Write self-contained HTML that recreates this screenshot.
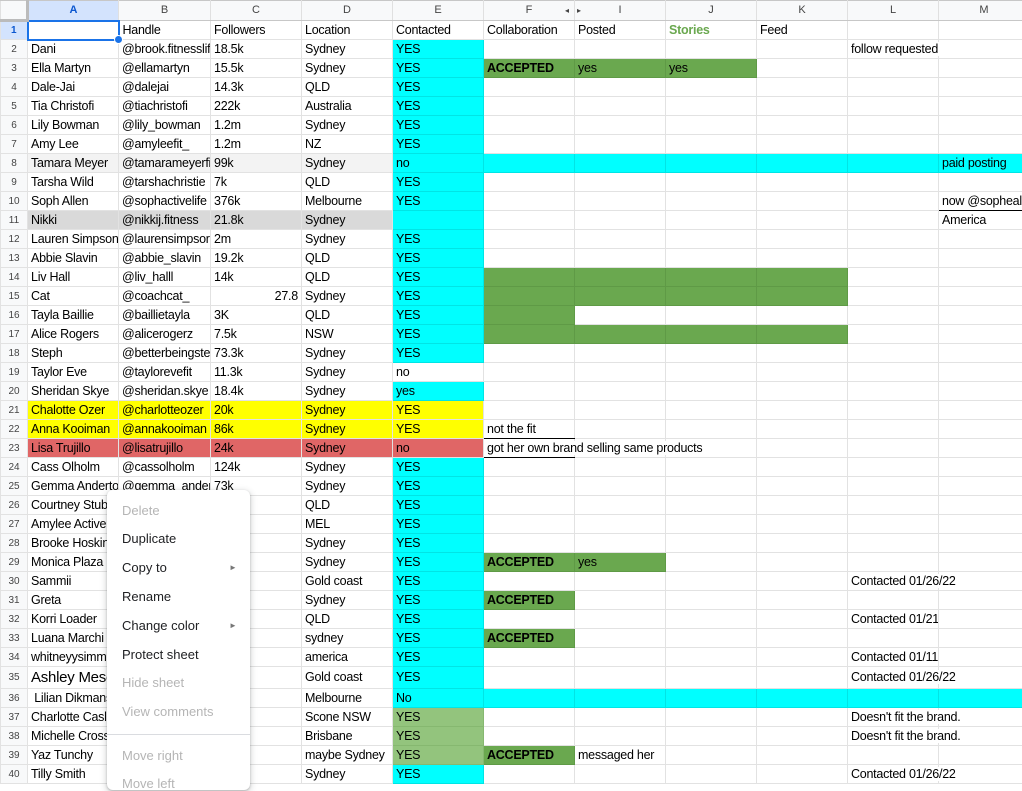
<!DOCTYPE html>
<html><head><meta charset="utf-8">
<style>
body{margin:0;width:1022px;height:782px;overflow:hidden;background:#fff;font-family:"Liberation Sans",Arial,sans-serif;position:relative;}
table{border-collapse:collapse;table-layout:fixed;position:absolute;left:0;top:0;width:1029px;}
td{border:1px solid #e2e2e2;height:19px;padding:0 3px;font-size:12.5px;letter-spacing:-0.25px;color:#000;white-space:nowrap;overflow:hidden;line-height:17px;box-sizing:border-box;}
td.o{overflow:visible;}
td.o span{position:relative;z-index:2;background:#fff;padding-right:2px;}
tr.h td{background:#f8f9fa;color:#444;font-size:11px;letter-spacing:0;text-align:center;height:20px;border-color:#c7c7c7 #e0e0e0;}
td.n{background:#f8f9fa;color:#444;font-size:10px;letter-spacing:0;text-align:center;padding:0;}
td.sel{background:#d3e3fd !important;color:#0b57d0 !important;font-weight:bold;}
.c{background:#00ffff;border-color:#00e5e5;}
.g{background:#6aa84f;border-color:#5f9a46;}
.lg{background:#93c47d;border-color:#86b870;}
.y{background:#ffff00;}
.r{background:#e06666;}
.gr{background:#d9d9d9;}
.lt{background:#f3f3f3;}
b{font-weight:bold;}
.menu{position:absolute;left:107px;top:490px;width:143px;height:300px;background:#fff;border-radius:6px;box-shadow:0 2px 6px 2px rgba(60,64,67,.15),0 1px 2px rgba(60,64,67,.3);z-index:5;}
.mi{position:absolute;left:15px;font-size:13px;color:#202124;}
.mi.d{color:#b5b5b5;}
.ar{position:absolute;left:122px;font-size:8px;color:#777;}
</style></head><body>
<table>
<colgroup><col style="width:27px"><col style="width:91px"><col style="width:92px"><col style="width:91px"><col style="width:91px"><col style="width:91px"><col style="width:91px"><col style="width:91px"><col style="width:91px"><col style="width:91px"><col style="width:91px"><col style="width:91px"></colgroup>
<tr class="h"><td style="border-right:3px solid #bbb;border-bottom:3px solid #bbb"></td><td class="sel">A</td><td>B</td><td>C</td><td>D</td><td>E</td><td style="position:relative">F<span style="position:absolute;right:5px;font-size:8px">◂</span></td><td style="position:relative"><span style="position:absolute;left:2px;font-size:8px">▸</span>I</td><td>J</td><td>K</td><td>L</td><td>M</td></tr>
<tr><td class="n sel">1</td><td style="border:2px solid #1a73e8;position:relative;overflow:visible"><span style="position:absolute;right:-5px;bottom:-5px;width:7px;height:7px;border-radius:50%;background:#1a73e8;border:1px solid #fff"></span></td><td>Handle</td><td>Followers</td><td>Location</td><td>Contacted</td><td>Collaboration</td><td>Posted</td><td style="color:#6aa84f;font-weight:bold">Stories</td><td>Feed</td><td></td><td></td></tr>
<tr><td class="n">2</td><td>Dani</td><td>@brook.fitnesslif</td><td>18.5k</td><td>Sydney</td><td class="c">YES</td><td></td><td></td><td></td><td></td><td class="o"><span>follow requested</span></td><td></td></tr>
<tr><td class="n">3</td><td>Ella Martyn</td><td>@ellamartyn</td><td>15.5k</td><td>Sydney</td><td class="c">YES</td><td class="g"><b>ACCEPTED</b></td><td class="g">yes</td><td class="g">yes</td><td></td><td></td><td></td></tr>
<tr><td class="n">4</td><td>Dale-Jai</td><td>@dalejai</td><td>14.3k</td><td>QLD</td><td class="c">YES</td><td></td><td></td><td></td><td></td><td></td><td></td></tr>
<tr><td class="n">5</td><td>Tia Christofi</td><td>@tiachristofi</td><td>222k</td><td>Australia</td><td class="c">YES</td><td></td><td></td><td></td><td></td><td></td><td></td></tr>
<tr><td class="n">6</td><td>Lily Bowman</td><td>@lily_bowman</td><td>1.2m</td><td>Sydney</td><td class="c">YES</td><td></td><td></td><td></td><td></td><td></td><td></td></tr>
<tr><td class="n">7</td><td>Amy Lee</td><td>@amyleefit_</td><td>1.2m</td><td>NZ</td><td class="c">YES</td><td></td><td></td><td></td><td></td><td></td><td></td></tr>
<tr><td class="n">8</td><td class="lt">Tamara Meyer</td><td class="lt">@tamarameyerfi</td><td class="lt">99k</td><td class="lt">Sydney</td><td class="c">no</td><td class="c"></td><td class="c"></td><td class="c"></td><td class="c"></td><td class="c"></td><td class="c">paid posting</td></tr>
<tr><td class="n">9</td><td>Tarsha Wild</td><td>@tarshachristie</td><td>7k</td><td>QLD</td><td class="c">YES</td><td></td><td></td><td></td><td></td><td></td><td></td></tr>
<tr><td class="n">10</td><td>Soph Allen</td><td>@sophactivelife</td><td>376k</td><td>Melbourne</td><td class="c">YES</td><td></td><td></td><td></td><td></td><td></td><td style="border:1px solid #000">now @sopheall</td></tr>
<tr><td class="n">11</td><td class="gr">Nikki</td><td class="gr">@nikkij.fitness</td><td class="gr">21.8k</td><td class="gr">Sydney</td><td class="c"></td><td></td><td></td><td></td><td></td><td></td><td>America</td></tr>
<tr><td class="n">12</td><td>Lauren Simpson</td><td>@laurensimpsor</td><td>2m</td><td>Sydney</td><td class="c">YES</td><td></td><td></td><td></td><td></td><td></td><td></td></tr>
<tr><td class="n">13</td><td>Abbie Slavin</td><td>@abbie_slavin</td><td>19.2k</td><td>QLD</td><td class="c">YES</td><td></td><td></td><td></td><td></td><td></td><td></td></tr>
<tr><td class="n">14</td><td>Liv Hall</td><td>@liv_halll</td><td>14k</td><td>QLD</td><td class="c">YES</td><td class="g"></td><td class="g"></td><td class="g"></td><td class="g"></td><td></td><td></td></tr>
<tr><td class="n">15</td><td>Cat</td><td>@coachcat_</td><td style="text-align:right">27.8</td><td>Sydney</td><td class="c">YES</td><td class="g"></td><td class="g"></td><td class="g"></td><td class="g"></td><td></td><td></td></tr>
<tr><td class="n">16</td><td>Tayla Baillie</td><td>@baillietayla</td><td>3K</td><td>QLD</td><td class="c">YES</td><td class="g"></td><td></td><td></td><td></td><td></td><td></td></tr>
<tr><td class="n">17</td><td>Alice Rogers</td><td>@alicerogerz</td><td>7.5k</td><td>NSW</td><td class="c">YES</td><td class="g"></td><td class="g"></td><td class="g"></td><td class="g"></td><td></td><td></td></tr>
<tr><td class="n">18</td><td>Steph</td><td>@betterbeingste</td><td>73.3k</td><td>Sydney</td><td class="c">YES</td><td></td><td></td><td></td><td></td><td></td><td></td></tr>
<tr><td class="n">19</td><td>Taylor Eve</td><td>@taylorevefit</td><td>11.3k</td><td>Sydney</td><td>no</td><td></td><td></td><td></td><td></td><td></td><td></td></tr>
<tr><td class="n">20</td><td>Sheridan Skye</td><td>@sheridan.skye</td><td>18.4k</td><td>Sydney</td><td class="c">yes</td><td></td><td></td><td></td><td></td><td></td><td></td></tr>
<tr><td class="n">21</td><td class="y">Chalotte Ozer</td><td class="y">@charlotteozer</td><td class="y">20k</td><td class="y">Sydney</td><td class="y">YES</td><td></td><td></td><td></td><td></td><td></td><td></td></tr>
<tr><td class="n">22</td><td class="y">Anna Kooiman</td><td class="y">@annakooiman</td><td class="y">86k</td><td class="y">Sydney</td><td class="y">YES</td><td style="border-bottom:1px solid #000">not the fit</td><td></td><td></td><td></td><td></td><td></td></tr>
<tr><td class="n">23</td><td class="r">Lisa Trujillo</td><td class="r">@lisatrujillo</td><td class="r">24k</td><td class="r">Sydney</td><td class="r">no</td><td class="o" style="border-bottom:1px solid #000"><span>got her own brand selling same products</span></td><td></td><td></td><td></td><td></td><td></td></tr>
<tr><td class="n">24</td><td>Cass Olholm</td><td>@cassolholm</td><td>124k</td><td>Sydney</td><td class="c">YES</td><td></td><td></td><td></td><td></td><td></td><td></td></tr>
<tr><td class="n">25</td><td>Gemma Anderto</td><td>@gemma_ander</td><td>73k</td><td>Sydney</td><td class="c">YES</td><td></td><td></td><td></td><td></td><td></td><td></td></tr>
<tr><td class="n">26</td><td>Courtney Stubbs</td><td></td><td></td><td>QLD</td><td class="c">YES</td><td></td><td></td><td></td><td></td><td></td><td></td></tr>
<tr><td class="n">27</td><td>Amylee Active</td><td></td><td></td><td>MEL</td><td class="c">YES</td><td></td><td></td><td></td><td></td><td></td><td></td></tr>
<tr><td class="n">28</td><td>Brooke Hoskin</td><td></td><td></td><td>Sydney</td><td class="c">YES</td><td></td><td></td><td></td><td></td><td></td><td></td></tr>
<tr><td class="n">29</td><td>Monica Plaza</td><td></td><td></td><td>Sydney</td><td class="c">YES</td><td class="g"><b>ACCEPTED</b></td><td class="g">yes</td><td></td><td></td><td></td><td></td></tr>
<tr><td class="n">30</td><td>Sammii</td><td></td><td></td><td>Gold coast</td><td class="c">YES</td><td></td><td></td><td></td><td></td><td class="o"><span>Contacted 01/26/22</span></td><td></td></tr>
<tr><td class="n">31</td><td>Greta</td><td></td><td></td><td>Sydney</td><td class="c">YES</td><td class="g"><b>ACCEPTED</b></td><td></td><td></td><td></td><td></td><td></td></tr>
<tr><td class="n">32</td><td>Korri Loader</td><td></td><td></td><td>QLD</td><td class="c">YES</td><td></td><td></td><td></td><td></td><td>Contacted 01/21</td><td></td></tr>
<tr><td class="n">33</td><td>Luana Marchi</td><td></td><td></td><td>sydney</td><td class="c">YES</td><td class="g"><b>ACCEPTED</b></td><td></td><td></td><td></td><td></td><td></td></tr>
<tr><td class="n">34</td><td>whitneyysimmons</td><td></td><td></td><td>america</td><td class="c">YES</td><td></td><td></td><td></td><td></td><td>Contacted 01/11</td><td></td></tr>
<tr><td class="n" style="height:22px">35</td><td style="font-size:15px">Ashley Meso</td><td></td><td></td><td>Gold coast</td><td class="c">YES</td><td></td><td></td><td></td><td></td><td class="o"><span>Contacted 01/26/22</span></td><td></td></tr>
<tr><td class="n">36</td><td>&nbsp;Lilian Dikmans</td><td></td><td></td><td>Melbourne</td><td class="c">No</td><td class="c"></td><td class="c"></td><td class="c"></td><td class="c"></td><td class="c"></td><td class="c"></td></tr>
<tr><td class="n">37</td><td>Charlotte Caslick</td><td></td><td></td><td>Scone NSW</td><td class="lg">YES</td><td></td><td></td><td></td><td></td><td class="o"><span>Doesn't fit the brand.</span></td><td></td></tr>
<tr><td class="n">38</td><td>Michelle Cross</td><td></td><td></td><td>Brisbane</td><td class="lg">YES</td><td></td><td></td><td></td><td></td><td class="o"><span>Doesn't fit the brand.</span></td><td></td></tr>
<tr><td class="n">39</td><td>Yaz Tunchy</td><td></td><td></td><td>maybe Sydney</td><td class="lg">YES</td><td class="g"><b>ACCEPTED</b></td><td>messaged her</td><td></td><td></td><td></td><td></td></tr>
<tr><td class="n">40</td><td>Tilly Smith</td><td></td><td></td><td>Sydney</td><td class="c">YES</td><td></td><td></td><td></td><td></td><td class="o"><span>Contacted 01/26/22</span></td><td></td></tr>
</table>
<div class="menu">
<div class="mi d" style="top:13px">Delete</div>
<div class="mi" style="top:41px">Duplicate</div>
<div class="mi" style="top:70px">Copy to</div><div class="ar" style="top:73px">►</div>
<div class="mi" style="top:99px">Rename</div>
<div class="mi" style="top:128px">Change color</div><div class="ar" style="top:131px">►</div>
<div class="mi" style="top:157px">Protect sheet</div>
<div class="mi d" style="top:185px">Hide sheet</div>
<div class="mi d" style="top:214px">View comments</div>
<div style="position:absolute;left:0;right:0;top:244px;border-top:1px solid #dadce0"></div>
<div class="mi d" style="top:258px">Move right</div>
<div class="mi d" style="top:286px">Move left</div>
</div>
</body></html>
